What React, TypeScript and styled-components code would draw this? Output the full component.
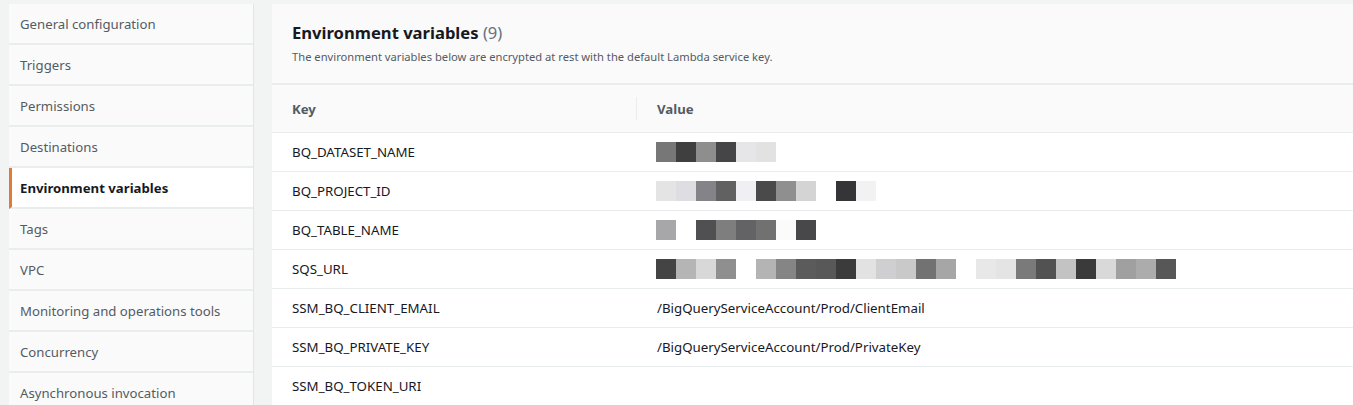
import React from "react";
import styled, { createGlobalStyle } from "styled-components";

const Global = createGlobalStyle`
  html, body { margin: 0; padding: 0; background: #f2f3f3; }
  body { font-family: "Noto Sans", "Open Sans", Arial, sans-serif; -webkit-font-smoothing: antialiased; }
  * { box-sizing: border-box; }
`;

const Page = styled.div`
  display: flex;
  align-items: flex-start;
  padding: 4px 0 0 9px;
  gap: 18px;
  height: 405px;
  overflow: hidden;
`;

const Sidebar = styled.nav`
  width: 245px;
  flex: none;
  display: flex;
  flex-direction: column;
  border-right: 1px solid #e4e6e6;
`;

const NavItem = styled.div<{ $active?: boolean }>`
  height: 41px;
  display: flex;
  align-items: center;
  padding-left: ${(p) => (p.$active ? "8px" : "11px")};
  border-bottom: 2px solid #eaeded;
  border-left: ${(p) => (p.$active ? "3px solid #e07b39" : "none")};
  background: ${(p) => (p.$active ? "#ffffff" : "#fafafa")};
  color: ${(p) => (p.$active ? "#16191f" : "#545b64")};
  font-weight: ${(p) => (p.$active ? 700 : 400)};
  font-size: 13.2px;
  white-space: nowrap;
`;

const Main = styled.section`
  flex: 1;
  min-width: 0;
  background: #ffffff;
`;

const Header = styled.header`
  height: 81px;
  background: #fafafa;
  border-bottom: 2px solid #eaeded;
  padding: 17px 20px 0;
`;

const Title = styled.h2`
  margin: 0;
  font-size: 16.6px;
  font-weight: 700;
  color: #16191f;
  line-height: 23px;
`;

const Count = styled.span`
  font-weight: 400;
  color: #687078;
`;

const Subtitle = styled.p`
  margin: 5px 0 0;
  font-size: 11.2px;
  color: #545b64;
  line-height: 15px;
`;

const Table = styled.div`
  display: grid;
  grid-template-columns: 364px 1fr;
`;

const HeadCell = styled.div<{ $divider?: boolean }>`
  height: 48px;
  display: flex;
  align-items: center;
  padding-left: ${(p) => (p.$divider ? "21px" : "20px")};
  background: #fafafa;
  border-bottom: 1px solid #eaeded;
  font-size: 13.2px;
  font-weight: 700;
  color: #545b64;
  position: relative;
  &::before {
    content: "";
    display: ${(p) => (p.$divider ? "block" : "none")};
    position: absolute;
    left: 0;
    top: 12px;
    height: 23px;
    width: 1px;
    background: #eaeded;
  }
`;

const Cell = styled.div<{ $value?: boolean }>`
  height: 39px;
  display: flex;
  align-items: center;
  padding-left: ${(p) => (p.$value ? "21px" : "20px")};
  border-bottom: 1px solid #eaeded;
  font-size: 13.3px;
  color: #16191f;
  white-space: nowrap;
`;

const Mosaic = styled.div`
  display: flex;
  margin-left: -1px;
`;

const Tile = styled.span<{ $c: string }>`
  width: 20px;
  height: 20px;
  background: ${(p) => p.$c};
`;

const W = "transparent";

const rows: { key: string; tiles?: string[]; text?: string }[] = [
  {
    key: "BQ_DATASET_NAME",
    tiles: ["#777777", "#3f3f3f", "#8e8e8e", "#454548", "#e6e6e8", "#e2e2e2"],
  },
  {
    key: "BQ_PROJECT_ID",
    tiles: ["#e4e4e4", "#dedee2", "#848488", "#616161", "#f0f0f4", "#4a4a4a", "#8f8f8f", "#d4d4d4", W, "#353538", "#f2f2f2"],
  },
  {
    key: "BQ_TABLE_NAME",
    tiles: ["#a7a7a9", W, "#505052", "#7e7e7e", "#636365", "#717171", "#fbfbfb", "#48484a"],
  },
  {
    key: "SQS_URL",
    tiles: [
      "#444444", "#b5b5b5", "#d8d8d8", "#8f8f8f", W,
      "#b4b4b4", "#858585", "#5b5b5b", "#585858", "#3b3b3b", "#e2e2e2", "#cfcfd1", "#c9c9c9", "#727272", "#a6a6a6", W,
      "#e8e8e8", "#e4e4e4", "#7a7a7a", "#525252", "#c3c3c3", "#3a3a3a", "#d9d9d9", "#a0a0a0", "#acacac", "#575757",
    ],
  },
  { key: "SSM_BQ_CLIENT_EMAIL", text: "/BigQueryServiceAccount/Prod/ClientEmail" },
  { key: "SSM_BQ_PRIVATE_KEY", text: "/BigQueryServiceAccount/Prod/PrivateKey" },
  { key: "SSM_BQ_TOKEN_URI", text: "" },
];

const nav = [
  "General configuration",
  "Triggers",
  "Permissions",
  "Destinations",
  "Environment variables",
  "Tags",
  "VPC",
  "Monitoring and operations tools",
  "Concurrency",
  "Asynchronous invocation",
];

export default function App() {
  return (
    <>
      <Global />
      <Page>
        <Sidebar>
          {nav.map((n) => (
            <NavItem key={n} $active={n === "Environment variables"}>
              {n}
            </NavItem>
          ))}
        </Sidebar>
        <Main>
          <Header>
            <Title>
              Environment variables <Count>(9)</Count>
            </Title>
            <Subtitle>
              The environment variables below are encrypted at rest with the default Lambda service key.
            </Subtitle>
          </Header>
          <Table>
            <HeadCell>Key</HeadCell>
            <HeadCell $divider>Value</HeadCell>
            {rows.map((r) => (
              <React.Fragment key={r.key}>
                <Cell>{r.key}</Cell>
                <Cell $value>
                  {r.tiles ? (
                    <Mosaic>
                      {r.tiles.map((c, i) => (
                        <Tile key={i} $c={c} />
                      ))}
                    </Mosaic>
                  ) : (
                    r.text
                  )}
                </Cell>
              </React.Fragment>
            ))}
          </Table>
        </Main>
      </Page>
    </>
  );
}
